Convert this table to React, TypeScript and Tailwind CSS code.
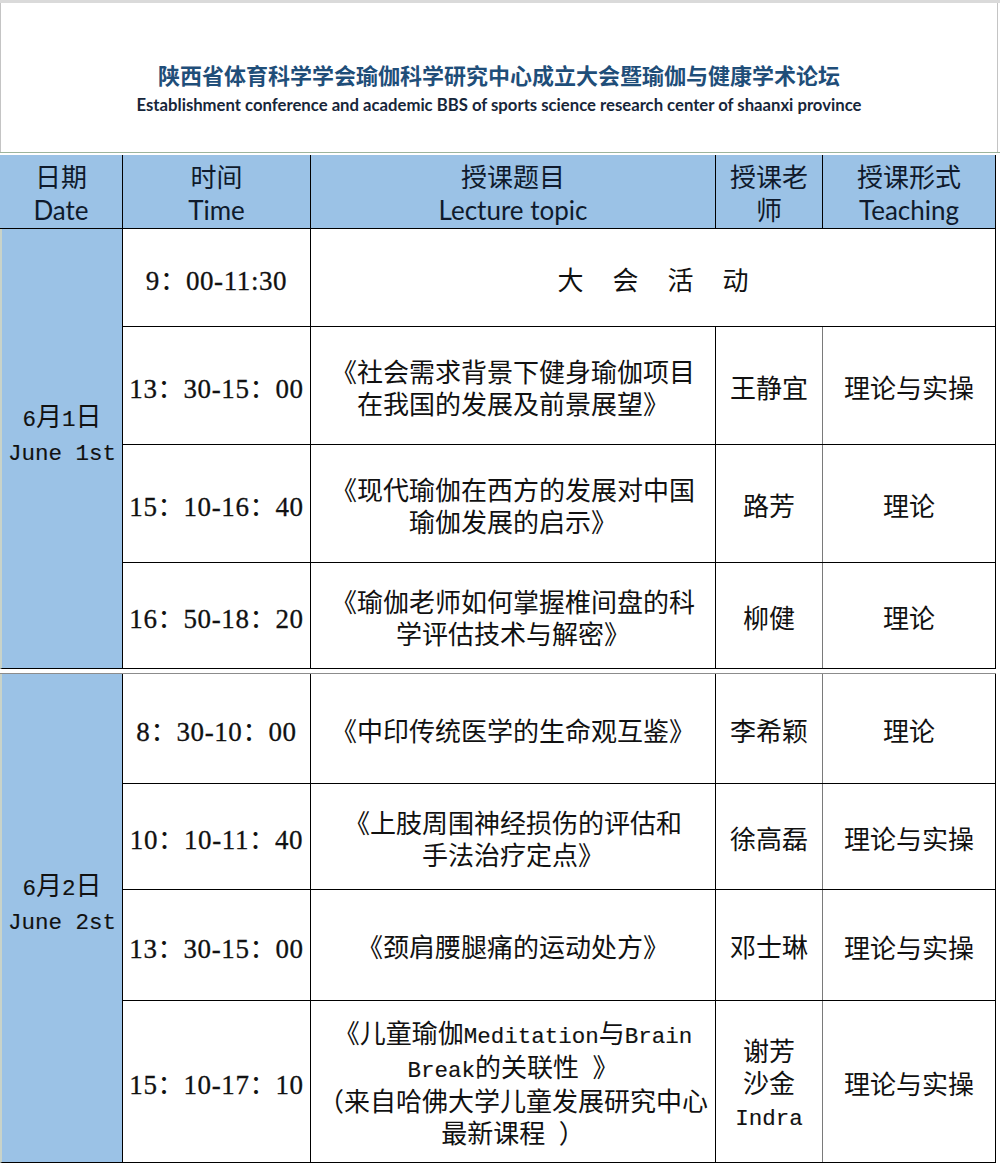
import React from "react";

const ASCII = /^[\x20-\x7E]+$/;

function Mix({ text, serif }: { text: string; serif?: boolean }) {
  const parts = text.split(/([\x20-\x7E]+)/).filter((p) => p.length > 0);
  return (
    <>
      {parts.map((p, i) =>
        ASCII.test(p) ? (
          serif ? (
            <span key={i} className="font-['Liberation_Serif',serif] text-[27px] tracking-[0.6px] whitespace-pre [-webkit-text-stroke:0.3px_#111]">
              {p}
            </span>
          ) : (
            <span key={i} className="font-['Liberation_Mono',monospace] text-[22.5px] whitespace-pre [-webkit-text-stroke:0.15px_#111]">
              {p}
            </span>
          )
        ) : (
          <span key={i}>{p}</span>
        )
      )}
    </>
  );
}

type Row = {
  h: string;
  time: string;
  span?: string[];
  topic?: string[];
  teacher?: string[];
  form?: string;
};

const day1: Row[] = [
  { h: "h-[98px]", time: "9：00-11:30", span: ["大", "会", "活", "动"] },
  {
    h: "h-[118px]",
    time: "13：30-15：00",
    topic: ["《社会需求背景下健身瑜伽项目", "在我国的发展及前景展望》"],
    teacher: ["王静宜"],
    form: "理论与实操",
  },
  {
    h: "h-[118px]",
    time: "15：10-16：40",
    topic: ["《现代瑜伽在西方的发展对中国", "瑜伽发展的启示》"],
    teacher: ["路芳"],
    form: "理论",
  },
  {
    h: "h-[106px]",
    time: "16：50-18：20",
    topic: ["《瑜伽老师如何掌握椎间盘的科", "学评估技术与解密》"],
    teacher: ["柳健"],
    form: "理论",
  },
];

const day2: Row[] = [
  {
    h: "h-[110px]",
    time: "8：30-10：00",
    topic: ["《中印传统医学的生命观互鉴》"],
    teacher: ["李希颖"],
    form: "理论",
  },
  {
    h: "h-[106px]",
    time: "10：10-11：40",
    topic: ["《上肢周围神经损伤的评估和", "手法治疗定点》"],
    teacher: ["徐高磊"],
    form: "理论与实操",
  },
  {
    h: "h-[111px]",
    time: "13：30-15：00",
    topic: ["《颈肩腰腿痛的运动处方》"],
    teacher: ["邓士琳"],
    form: "理论与实操",
  },
  {
    h: "h-[162px]",
    time: "15：10-17：10",
    topic: [
      "《儿童瑜伽Meditation与Brain",
      "Break的关联性 》",
      "（来自哈佛大学儿童发展研究中心",
      "最新课程 ）",
    ],
    teacher: ["谢芳", "沙金", "Indra"],
    form: "理论与实操",
  },
];

function Lines({ lines }: { lines: string[] }) {
  return (
    <div className="flex flex-col items-center leading-[32px]">
      {lines.map((l, i) => (
        <div key={i} className="whitespace-pre">
          <Mix text={l} />
        </div>
      ))}
    </div>
  );
}

function BodyRow({ r }: { r: Row }) {
  const cell = "shrink-0 flex items-center justify-center pt-[8px]";
  return (
    <div className={`flex ${r.h} border-b border-black`}>
      <div className={`w-[188px] border-r border-black ${cell}`}>
        <Mix text={r.time} serif />
      </div>
      {r.span ? (
        <div className={`w-[685px] border-r border-black gap-[29px] ${cell}`}>
          {r.span.map((c) => (
            <span key={c}>{c}</span>
          ))}
        </div>
      ) : (
        <>
          <div className={`w-[405px] border-r border-black ${cell}`}>
            <Lines lines={r.topic ?? []} />
          </div>
          <div className={`w-[107px] border-r border-[#7a7a7a] ${cell}`}>
            <Lines lines={r.teacher ?? []} />
          </div>
          <div className={`w-[173px] border-r border-black ${cell}`}>
            <Mix text={r.form ?? ""} />
          </div>
        </>
      )}
    </div>
  );
}

function Day({ date, en, rows }: { date: string; en: string; rows: Row[] }) {
  return (
    <div className="flex">
      <div className="w-[123px] shrink-0 bg-[#9bc2e6] border-l-2 border-l-[#c9d3c9] border-r border-b border-r-black border-b-black flex flex-col items-center justify-center pb-[26px] leading-[32px]">
        <div>
          <Mix text={date} />
        </div>
        <div>
          <Mix text={en} />
        </div>
      </div>
      <div className="flex flex-col w-[873px]">
        {rows.map((r, i) => (
          <BodyRow key={i} r={r} />
        ))}
      </div>
    </div>
  );
}

export default function App() {
  const headCell = "shrink-0 border-r border-black flex flex-col items-center justify-center pt-[4px] leading-[33px]";
  return (
    <div className="w-[1000px] h-[1170px] bg-white overflow-hidden text-[#111111] font-['Liberation_Serif','Noto_Sans_CJK_SC',serif] text-[26px]">
      <div className="h-[3px] bg-[#dadada]" />
      <div className="h-[149px] w-[998px] border-x border-[#c4c4c4] flex flex-col items-center pt-[55px]">
        <div className="font-['Noto_Sans_CJK_SC',sans-serif] font-bold text-[22px] leading-[32px] text-[#1f4e79]">
          陕西省体育科学学会瑜伽科学研究中心成立大会暨瑜伽与健康学术论坛
        </div>
        <div className="mt-[4px] font-['Lato','Noto_Sans',sans-serif] font-bold text-[16.7px] leading-[22px] text-[#17263a] whitespace-nowrap">
          Establishment conference and academic BBS of sports science research center of shaanxi province
        </div>
      </div>
      <div className="h-[3px] border-t border-[#9db49d]" />
      <div className="flex h-[74px] bg-[#9bc2e6] border-b border-black w-[996px] font-['Lato','Noto_Sans_CJK_SC',sans-serif] text-[26px] text-[#0f1a2c]">
        <div className={`w-[123px] ${headCell}`}>
          <div>日期</div>
          <div>Date</div>
        </div>
        <div className={`w-[188px] ${headCell}`}>
          <div>时间</div>
          <div>Time</div>
        </div>
        <div className={`w-[405px] ${headCell}`}>
          <div>授课题目</div>
          <div>Lecture topic</div>
        </div>
        <div className={`w-[107px] ${headCell}`}>
          <div>授课老</div>
          <div>师</div>
        </div>
        <div className={`w-[173px] ${headCell}`}>
          <div>授课形式</div>
          <div>Teaching</div>
        </div>
      </div>
      <Day date="6月1日" en="June 1st" rows={day1} />
      <div className="h-[5px] border-b border-[#8c8c8c] w-[996px]" />
      <Day date="6月2日" en="June 2st" rows={day2} />
      <div className="h-[7px]" />
    </div>
  );
}
